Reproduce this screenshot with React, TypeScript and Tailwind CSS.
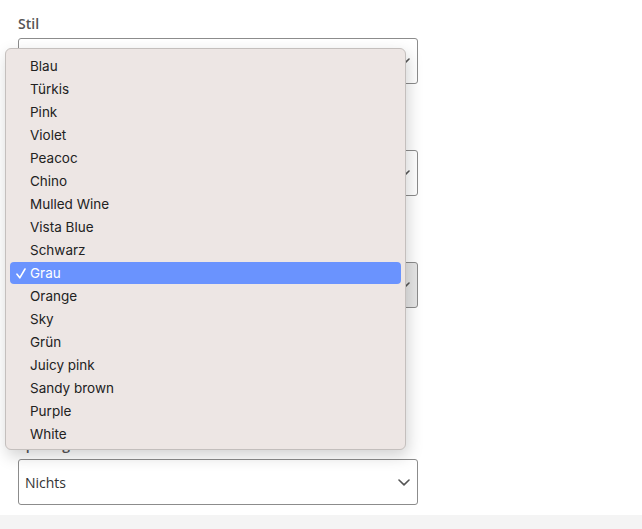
const colors = [
  "Blau",
  "Türkis",
  "Pink",
  "Violet",
  "Peacoc",
  "Chino",
  "Mulled Wine",
  "Vista Blue",
  "Schwarz",
  "Grau",
  "Orange",
  "Sky",
  "Grün",
  "Juicy pink",
  "Sandy brown",
  "Purple",
  "White",
];

function Chevron() {
  return (
    <svg width="12" height="7" viewBox="0 0 12 7" fill="none" className="shrink-0">
      <path d="M1 1l5 4.8L11 1" stroke="#555" strokeWidth="1.6" strokeLinecap="round" strokeLinejoin="round" />
    </svg>
  );
}

function Tick() {
  return (
    <svg width="10" height="11" viewBox="0 0 10 11" fill="none">
      <path d="M1 6.2l2.8 3.6L9 1" stroke="white" strokeWidth="1.6" strokeLinecap="round" strokeLinejoin="round" />
    </svg>
  );
}

// label text stays empty where the open popup hides it
function Field({
  label,
  value,
  shaded,
  className,
}: {
  label?: string;
  value?: string;
  shaded?: boolean;
  className?: string;
}) {
  return (
    <div className={className}>
      <div className="h-5 text-[14px] leading-5 font-semibold text-[#555]">{label}</div>
      <div
        className={`mt-1 h-[46px] w-[400px] rounded-[3px] border border-[#8c8c8c] flex items-center justify-between pl-[6px] pr-[7px] text-[14px] text-[#333] ${
          shaded ? "bg-[#e6e6e6]" : "bg-white"
        }`}
      >
        <span>{value}</span>
        <Chevron />
      </div>
    </div>
  );
}

export default function App() {
  const selected = "Grau";
  return (
    <div className="relative w-[642px] h-[529px] bg-white overflow-hidden font-['Open_Sans',sans-serif]">
      <div className="h-[515px] px-[18px] pt-[14px]">
        <Field label="Stil" />
        <Field className="mt-[42px]" />
        <Field shaded className="mt-[42px]" />
        <Field label="Spacing" value="Nichts" className="mt-[127px]" />
      </div>
      <div className="h-[14px] bg-[#f4f4f4]" />

      {/* native select popup */}
      <div className="absolute left-[5px] top-[48px] w-[401px] h-[402px] rounded-[6px] border border-[#c4bfbd] bg-[#ede6e4] shadow-[2px_6px_16px_rgba(0,0,0,0.18)] pt-[6px] px-[4px] font-['Inter',sans-serif]">
        {colors.map((c) => (
          <div key={c} className="h-[23px] flex">
            <div
              className={`flex-1 h-[22px] rounded-[4px] flex items-center text-[13.5px] leading-none pt-[1px] ${
                c === selected ? "bg-[#6a93fe] text-white" : "text-[#222]"
              }`}
            >
              <span className="w-[20px] flex justify-center pl-[2px]">
                {c === selected && <Tick />}
              </span>
              <span>{c}</span>
            </div>
          </div>
        ))}
      </div>
    </div>
  );
}
